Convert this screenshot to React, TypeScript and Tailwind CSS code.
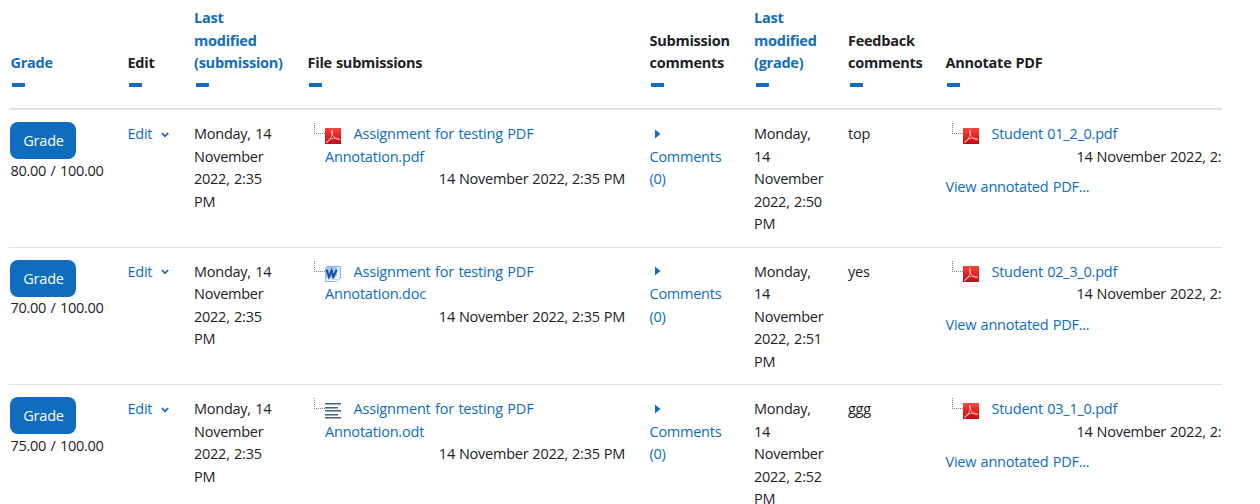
import type { ReactNode } from "react";

type FileKind = "pdf" | "doc" | "odt";

interface Submission {
  grade: string;
  kind: FileKind;
  gradedTime: string;
  feedback: string;
  annotated: string;
}

const submissions: Submission[] = [
  { grade: "80.00", kind: "pdf", gradedTime: "2:50", feedback: "top", annotated: "Student 01_2_0.pdf" },
  { grade: "70.00", kind: "doc", gradedTime: "2:51", feedback: "yes", annotated: "Student 02_3_0.pdf" },
  { grade: "75.00", kind: "odt", gradedTime: "2:52", feedback: "ggg", annotated: "Student 03_1_0.pdf" },
];

const columns = "grid grid-cols-[117px_66.5px_113.5px_342px_104.5px_94px_97.5px_277px] pl-[1.5px]";

function PdfIcon() {
  return (
    <svg viewBox="0 0 16 16" className="h-4 w-4">
      <defs>
        <linearGradient id="pdf-red" x1="0" y1="0" x2="0" y2="1">
          <stop offset="0" stopColor="#f5483c" />
          <stop offset="0.5" stopColor="#e3231f" />
          <stop offset="1" stopColor="#c00a18" />
        </linearGradient>
      </defs>
      <rect width="16" height="16" fill="url(#pdf-red)" />
      <path
        d="M1.6 14.6C3.6 14 6 10.2 7 7.4C7.7 5.3 7.5 2.4 6.9 2.4C6.2 2.4 6.6 5.8 8.2 8C9.8 10.4 13.4 12.3 14.7 11.6C15.2 10.3 9.6 9.8 6 10.8C3.8 11.5 1.8 13 1.6 14.6Z"
        fill="none"
        stroke="#fff"
        strokeOpacity="0.8"
        strokeWidth="0.75"
      />
    </svg>
  );
}

function DocIcon() {
  return (
    <svg viewBox="0 0 16 16" className="h-4 w-4">
      <path d="M2 .5H15.5V12L12 15.5H.5V2Z" fill="#e6f0fa" stroke="#8db2dc" />
      <path d="M.5 2.5L2 1H12V12H.5Z" fill="#a3c8ee" />
      <path d="M6 15L15 7.5V12L12 15Z" fill="#fff" />
      <path d="M1.6 3.6L4 11L6.6 4.4L8.3 11L11.7 3.6" fill="none" stroke="#174f9f" strokeWidth="2" />
      <path d="M9 13.5H13M12.5 11.5H14.5" stroke="#b5cbe4" />
    </svg>
  );
}

function OdtIcon() {
  return (
    <svg viewBox="0 0 16 16" className="h-4 w-4">
      <path d="M0 0.5H16M0 4.5H13M0 7.5H16M0 11.5H13M0 14.5H16" stroke="#46698a" />
      <path d="M0 1.5H16M0 5.5H13M0 8.5H16M0 12.5H13M0 15.5H16" stroke="#9aabb8" />
    </svg>
  );
}

function FileIcon({ kind }: { kind: FileKind }) {
  return (
    <span className="mr-[12.5px] inline-block h-4 w-4 align-[-5px] leading-none">
      {kind === "pdf" ? <PdfIcon /> : kind === "doc" ? <DocIcon /> : <OdtIcon />}
    </span>
  );
}

function FileTree({ kind, children }: { kind: FileKind; children: ReactNode }) {
  return (
    <div className="flex pl-[6px]">
      <div className="h-[11px] w-[11.5px] shrink-0 border-b border-l border-dotted border-[#808080]" />
      <div className="whitespace-nowrap">
        <FileIcon kind={kind} />
        {children}
      </div>
    </div>
  );
}

function Heading({ link, children }: { link?: boolean; children: ReactNode }) {
  return (
    <div className={link ? "text-[#0f6cbf]" : "text-[#1d2125]"}>
      {children}
      <div className="h-[22.5px] pt-[8.5px] pl-[1.5px]">
        <div className="h-[3.5px] w-[13px] rounded-[0.5px] bg-[#0f6cbf]" />
      </div>
    </div>
  );
}

function Row({ row }: { row: Submission }) {
  return (
    <div className={`${columns} h-[137.5px] border-b border-[#dee2e6] pt-[13px]`}>
      <div>
        <button className="-mt-px -ml-[0.5px] block h-[37px] w-[66px] rounded-lg bg-[#0f6cbf] pt-[2px] pl-px text-[14.5px] tracking-[-0.2px] text-white">
          Grade
        </button>
        <div className="pt-[0.7px] tracking-[-0.27px]">{row.grade} / 100.00</div>
      </div>
      <div className="flex h-[22.5px] items-center text-[#0f6cbf]">
        Edit
        <svg viewBox="0 0 8 6" className="mt-px ml-[9px] h-[6px] w-2">
          <path d="M0.8 1L4 4.2L7.2 1" fill="none" stroke="currentColor" strokeWidth="1.7" />
        </svg>
      </div>
      <div>
        Monday, 14<br />November<br />2022, 2:35<br />PM
      </div>
      <div>
        <FileTree kind={row.kind}>
          <a className="tracking-[-0.2px] text-[#0f6cbf]">
            Assignment for testing PDF<br />Annotation.{row.kind}
          </a>
        </FileTree>
        <div className="w-[317.5px] text-right [word-spacing:0.5px]">14 November 2022, 2:35 PM</div>
      </div>
      <div className="text-[#0f6cbf]">
        <div className="flex h-[22.5px] items-center pb-px pl-[5px]">
          <svg viewBox="0 0 6 10" className="h-[10px] w-[6px]">
            <path d="M0 0.5L5.5 5L0 9.5Z" fill="currentColor" />
          </svg>
        </div>
        Comments<br />(0)
      </div>
      <div>
        Monday,<br />14<br />November<br />2022, {row.gradedTime}<br />PM
      </div>
      <div>{row.feedback}</div>
      <div className="whitespace-nowrap">
        <FileTree kind="pdf">
          <a className="text-[#0f6cbf]">{row.annotated}</a>
        </FileTree>
        <div className="pl-[131px] [word-spacing:0.5px]">14 November 2022, 2:</div>
        <a className="mt-[8px] block text-[#0f6cbf]">View annotated PDF...</a>
      </div>
    </div>
  );
}

export default function App() {
  return (
    <main className="h-[504px] overflow-hidden bg-white pl-[9px] font-['Open_Sans','Noto_Sans',sans-serif] text-[14.5px] leading-[22.5px] tracking-[-0.25px] text-[#1d2125] [word-spacing:0.9px]">
      <div className="w-[1213px] overflow-hidden">
        <div className={`${columns} h-[110px] items-end border-b-2 border-[#dee2e6] pb-[11px] font-bold [word-spacing:0.5px]`}>
          <Heading link>Grade</Heading>
          <Heading>Edit</Heading>
          <Heading link>Last<br />modified<br />(submission)</Heading>
          <Heading>File submissions</Heading>
          <Heading>Submission<br />comments</Heading>
          <Heading link>Last<br />modified<br />(grade)</Heading>
          <Heading>Feedback<br />comments</Heading>
          <Heading>Annotate PDF</Heading>
        </div>
        {submissions.map((row) => (
          <Row key={row.annotated} row={row} />
        ))}
      </div>
    </main>
  );
}
